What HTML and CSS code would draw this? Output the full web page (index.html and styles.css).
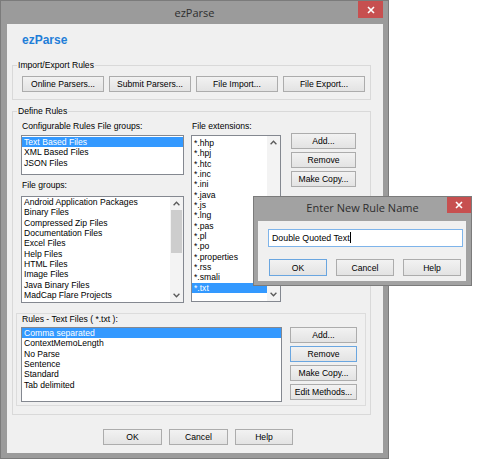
FILE: index.html
```html
<!DOCTYPE html>
<html>
<head>
<meta charset="utf-8">
<title>ezParse</title>
<link rel="stylesheet" href="styles.css">
</head>
<body>
<div class="win main-win">
  <div class="titlebar">
    <span></span>
    <span class="title">ezParse</span>
    <span class="close"><svg width="8" height="8" viewBox="0 0 8 8"><path d="M1 1L7 7M7 1L1 7" stroke="#fff" stroke-width="1.6" fill="none"/></svg></span>
  </div>
  <div class="client">
    <div class="brand">ezParse</div>
    <fieldset class="group group-io">
      <legend>Import/Export Rules</legend>
      <div class="io-row">
        <button class="btn btn-io">Online Parsers...</button>
        <button class="btn btn-io">Submit Parsers...</button>
        <button class="btn btn-io">File Import...</button>
        <button class="btn btn-io">File Export...</button>
      </div>
    </fieldset>
    <fieldset class="group group-def">
      <legend>Define Rules</legend>
      <div class="def-top">
        <div class="col col-groups">
          <div class="lbl">Configurable Rules File groups:</div>
          <div class="list list-cfg">
            <div class="items">
              <div class="item sel">Text Based Files</div>
              <div class="item">XML Based Files</div>
              <div class="item">JSON Files</div>
            </div>
          </div>
          <div class="lbl lbl-fg">File groups:</div>
          <div class="list list-fg">
            <div class="items">
              <div class="item">Android Application Packages</div>
              <div class="item">Binary Files</div>
              <div class="item">Compressed Zip Files</div>
              <div class="item">Documentation Files</div>
              <div class="item">Excel Files</div>
              <div class="item">Help Files</div>
              <div class="item">HTML Files</div>
              <div class="item">Image Files</div>
              <div class="item">Java Binary Files</div>
              <div class="item">MadCap Flare Projects</div>
            </div>
            <div class="sbar">
              <div class="sb-btn"><svg width="7" height="5" viewBox="0 0 7 5"><path d="M0.6 4.2L3.5 1.2L6.4 4.2" stroke="#5a5a5a" stroke-width="1.3" fill="none"/></svg></div>
              <div class="sb-track"><div class="thumb thumb-fg"></div></div>
              <div class="sb-btn"><svg width="7" height="5" viewBox="0 0 7 5"><path d="M0.6 0.8L3.5 3.8L6.4 0.8" stroke="#5a5a5a" stroke-width="1.3" fill="none"/></svg></div>
            </div>
          </div>
        </div>
        <div class="col col-ext">
          <div class="lbl">File extensions:</div>
          <div class="list list-ext">
            <div class="items">
              <div class="item">*.hhp</div>
              <div class="item">*.hpj</div>
              <div class="item">*.htc</div>
              <div class="item">*.inc</div>
              <div class="item">*.ini</div>
              <div class="item">*.java</div>
              <div class="item">*.js</div>
              <div class="item">*.lng</div>
              <div class="item">*.pas</div>
              <div class="item">*.pl</div>
              <div class="item">*.po</div>
              <div class="item">*.properties</div>
              <div class="item">*.rss</div>
              <div class="item">*.smali</div>
              <div class="item sel">*.txt</div>
            </div>
            <div class="sbar sbar-ext">
              <div class="sb-btn"><svg width="7" height="5" viewBox="0 0 7 5"><path d="M0.6 4.2L3.5 1.2L6.4 4.2" stroke="#5a5a5a" stroke-width="1.3" fill="none"/></svg></div>
              <div class="sb-track"><div class="thumb thumb-ext"></div></div>
              <div class="sb-btn"><svg width="7" height="5" viewBox="0 0 7 5"><path d="M0.6 0.8L3.5 3.8L6.4 0.8" stroke="#5a5a5a" stroke-width="1.3" fill="none"/></svg></div>
            </div>
          </div>
        </div>
        <div class="col col-btns">
          <button class="btn btn-side">Add...</button>
          <button class="btn btn-side">Remove</button>
          <button class="btn btn-side">Make Copy...</button>
        </div>
      </div>
      <div class="rules-panel">
        <div class="lbl">Rules - Text Files ( *.txt ):</div>
        <div class="rules-body">
          <div class="list list-rules">
            <div class="items">
              <div class="item sel">Comma separated</div>
              <div class="item">ContextMemoLength</div>
              <div class="item">No Parse</div>
              <div class="item">Sentence</div>
              <div class="item">Standard</div>
              <div class="item">Tab delimited</div>
            </div>
          </div>
          <div class="rules-btns">
            <button class="btn btn-rule">Add...</button>
            <button class="btn btn-rule focus">Remove</button>
            <button class="btn btn-rule">Make Copy...</button>
            <button class="btn btn-rule">Edit Methods...</button>
          </div>
        </div>
      </div>
    </fieldset>
    <div class="footer">
      <button class="btn btn-foot">OK</button>
      <button class="btn btn-foot">Cancel</button>
      <button class="btn btn-foot">Help</button>
    </div>
  </div>
</div>

<div class="win dlg-win">
  <div class="titlebar dlg-titlebar">
    <span></span>
    <span class="title dlg-title">Enter New Rule Name</span>
    <span class="close dlg-close"><svg width="8" height="8" viewBox="0 0 8 8"><path d="M1 1L7 7M7 1L1 7" stroke="#fff" stroke-width="1.6" fill="none"/></svg></span>
  </div>
  <div class="dlg-client">
    <div class="textbox">Double Quoted Text<span class="caret"></span></div>
    <div class="dlg-btns">
      <button class="btn btn-dlg focus">OK</button>
      <button class="btn btn-dlg">Cancel</button>
      <button class="btn btn-dlg">Help</button>
    </div>
  </div>
</div>
</body>
</html>
```

FILE: styles.css
```css
* { box-sizing: border-box; }
html, body { margin: 0; padding: 0; }
body {
  width: 477px;
  height: 460px;
  overflow: hidden;
  background: #ffffff;
  position: relative;
  font-family: "Liberation Sans", Arial, sans-serif;
  font-size: 8.6px;
  color: #000;
}

/* window frames */
.win {
  border: 1px solid #7b7b7b;
  background: #9b9b9b;
  display: flex;
  flex-direction: column;
}
.main-win { width: 389px; height: 459px; }
.titlebar {
  height: 23px;
  display: grid;
  grid-template-columns: 30px 1fr 30px;
  align-items: start;
}
.title {
  text-align: center;
  font-family: "Open Sans", "Noto Sans", sans-serif;
  font-size: 11px;
  line-height: 23px;
  color: #2e2e2e;
  white-space: nowrap;
}
.close {
  justify-self: end;
  width: 25px;
  height: 17px;
  margin-right: 5px;
  background: #c75050;
  display: flex;
  align-items: center;
  justify-content: center;
}
.client {
  flex: 1;
  margin: 0 5px 5px 6px;
  background: #f0f0f0;
  padding: 9px 12px 0 5px;
  display: flex;
  flex-direction: column;
}
.brand {
  font-family: "Liberation Sans", Arial, sans-serif;
  font-weight: bold;
  font-size: 12px;
  line-height: 14px;
  height: 14px;
  color: #1f7ed8;
  margin-left: 10px;
}

/* group boxes */
.group {
  margin: 0;
  border: 1px solid #d9d9d9;
  min-width: 0;
}
.group legend {
  padding: 0 1px;
  margin-left: 4px;
  line-height: 10px;
  font-size: 8.6px;
}
.group-io { margin-top: 13px; padding: 6px 0 7px 0; }
.io-row { display: flex; gap: 5px; padding-left: 9px; }
.group-def { margin-top: 6px; padding: 0 0 8px 0; }

/* buttons */
.btn {
  font-family: "Liberation Sans", Arial, sans-serif;
  font-size: 8.6px;
  color: #000;
  height: 16px;
  margin: 0;
  padding: 0;
  border: 1px solid #acacac;
  border-radius: 0;
  background: linear-gradient(#f2f2f2, #e3e3e3);
  display: flex;
  align-items: center;
  justify-content: center;
  white-space: nowrap;
}
.btn.focus { border-color: #6aa6e0; }
.btn-io { width: 82px; }
.btn-side { width: 65px; }
.btn-rule { width: 67px; }
.btn-foot { width: 59px; }
.btn-foot:last-child { width: 58px; }
.btn-dlg { width: 58px; height: 17px; }

/* define rules */
.def-top {
  display: flex;
  padding-top: 5px;
  margin: 0 4px 0 8px;
}
.col { display: flex; flex-direction: column; }
.col-groups { width: 163px; }
.col-ext { width: 90px; margin-left: 7px; }
.col-btns { width: 65px; margin-left: 10px; padding-top: 12px; gap: 3px; }
.lbl { line-height: 10px; height: 10px; margin-left: 1px; white-space: nowrap; }
.lbl-fg { margin-top: 5px; }

.list {
  background: #fff;
  border: 1px solid #848890;
  display: flex;
  overflow: hidden;
}
.items { flex: 1; min-width: 0; padding-top: 1px; }
.item {
  height: 10.33px;
  line-height: 10.33px;
  padding-left: 2px;
  white-space: nowrap;
}
.item.sel { background: #3399ff; color: #fff; }
.list-cfg { margin-top: 4px; height: 40px; }
.list-fg { margin-top: 6px; height: 107px; }
.list-fg .items { padding-top: 0; }
.list-ext { margin-top: 4px; height: 167px; }
.list-ext .items { padding-top: 2px; }

.sbar {
  width: 13px;
  background: #f3f3f3;
  display: flex;
  flex-direction: column;
}
.sb-btn {
  height: 13px;
  display: flex;
  align-items: center;
  justify-content: center;
}
.sb-track { flex: 1; padding: 0 1px; }
.thumb { background: #cdcdcd; }
.thumb-fg { height: 43px; }
.thumb-ext { height: 40px; margin-top: 80px; }

.rules-panel {
  margin: 10px 4px 0 3px;
  border: 1px solid #dcdcdc;
  padding: 0 8px 3px 4px;
}
.rules-body {
  margin-top: 3px;
  display: grid;
  grid-template-columns: 261px 67px;
  column-gap: 8px;
}
.list-rules { height: 75px; }
.list-rules .items { padding-top: 0; }
.rules-btns { display: flex; flex-direction: column; gap: 3px; }

.footer {
  margin-top: 14px;
  display: flex;
  gap: 7px;
  padding-left: 91px;
}

/* dialog */
.dlg-win {
  position: absolute;
  left: 253px;
  top: 196px;
  width: 219px;
  height: 90px;
  background: #a2a2a2;
}
.dlg-titlebar { height: 24px; }
.dlg-title { line-height: 22px; }
.dlg-close { width: 24px; height: 16px; margin-right: 0; }
.dlg-client {
  flex: 1;
  margin: 0 5px 4px 4px;
  background: #f0f0f0;
  padding: 8px 0 0 10px;
}
.textbox {
  width: 195px;
  height: 18px;
  background: #fff;
  border: 1px solid #7eb4ea;
  padding-left: 3px;
  line-height: 16px;
  font-size: 8.8px;
  white-space: nowrap;
}
.caret {
  display: inline-block;
  width: 1px;
  height: 11px;
  background: #000;
  vertical-align: -2px;
}
.dlg-btns {
  margin-top: 12px;
  padding-left: 1px;
  display: flex;
  gap: 9px;
}
```
